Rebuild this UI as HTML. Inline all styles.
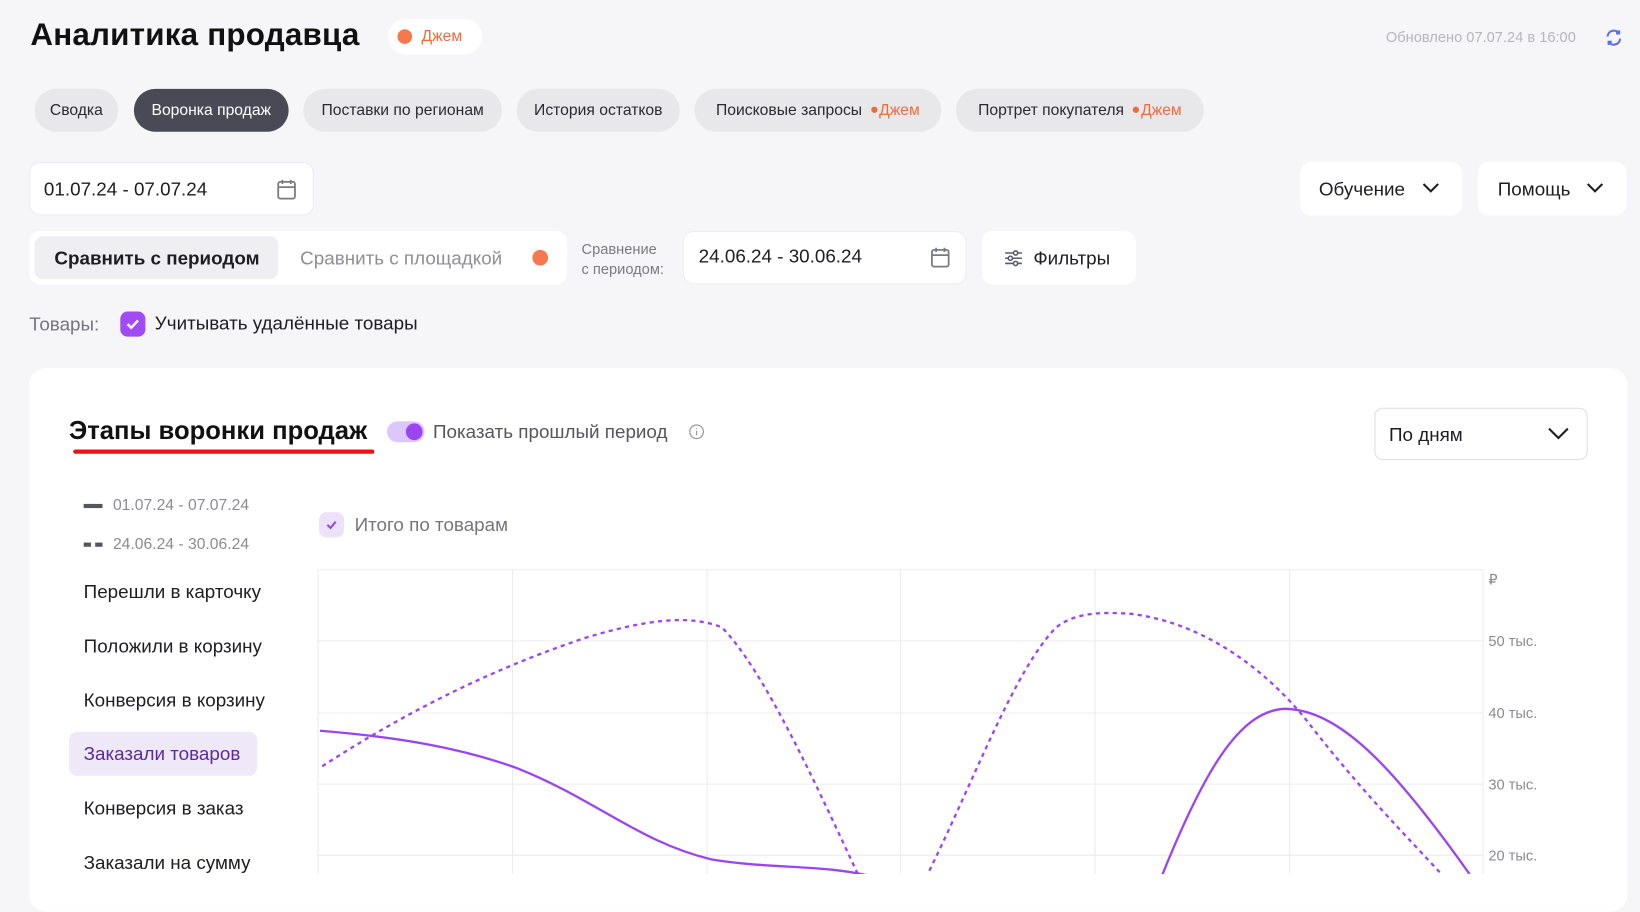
<!DOCTYPE html>
<html><head><meta charset="utf-8">
<style>
html,body{margin:0;padding:0;width:1640px;height:874px;overflow:hidden;background:#f6f6f8;}
#p{position:absolute;left:0;top:0;width:1568px;height:836px;transform:scale(1.04592,1.04545);transform-origin:0 0;font-family:"Liberation Sans",sans-serif;color:#1d1d22;}
.a{position:absolute;white-space:nowrap;}
.tab{position:absolute;top:85px;height:41px;border-radius:21px;background:#e8e8eb;font-size:15px;line-height:41px;text-align:center;color:#2a2a30;}
.box{position:absolute;background:#fff;border-radius:10px;}
.jam{color:#f26a3a;}
.dot{display:inline-block;width:6px;height:6px;border-radius:50%;background:#f26a3a;vertical-align:middle;margin:0 2px 2px 0;}
.m{position:absolute;left:80px;font-size:18px;color:#1d1d22;}
.yl{position:absolute;left:1423px;font-size:14px;color:#8b8b93;}
</style></head><body><div id="p">
<div class="a" style="left:29px;top:17px;font-size:30px;font-weight:bold;color:#111;letter-spacing:0.2px;">Аналитика продавца</div>
<div class="a" style="left:371px;top:18px;width:90px;height:34px;border-radius:17px;background:#fff;"></div>
<div class="a" style="left:380px;top:28px;width:14px;height:14px;border-radius:50%;background:#f47a4e;"></div>
<div class="a jam" style="left:403px;top:26px;font-size:15px;">Джем</div>
<div class="a" style="left:1325px;top:27px;font-size:14px;color:#b6b6bd;">Обновлено 07.07.24 в 16:00</div>
<svg class="a" style="left:1534px;top:27px" width="18" height="18" viewBox="0 0 18 18" fill="none" stroke="#5a6ef0" stroke-width="2"><path d="M3 8a6 6 0 0 1 11-3M15 10a6 6 0 0 1-11 3"/><path d="M14 2v3h-3M4 16v-3h3"/></svg>

<div class="tab" style="left:33px;width:80px;">Сводка</div>
<div class="tab" style="left:128px;width:148px;background:#4a4a57;color:#fff;">Воронка продаж</div>
<div class="tab" style="left:290px;width:190px;">Поставки по регионам</div>
<div class="tab" style="left:494px;width:156px;">История остатков</div>
<div class="tab" style="left:664px;width:236px;">Поисковые запросы &nbsp;<span class="dot"></span><span class="jam">Джем</span></div>
<div class="tab" style="left:914px;width:237px;">Портрет покупателя &nbsp;<span class="dot"></span><span class="jam">Джем</span></div>

<div class="box" style="left:28px;top:155px;width:272px;height:51px;border:1px solid #ececef;box-sizing:border-box;"></div>
<div class="a" style="left:42px;top:171px;font-size:18px;">01.07.24 - 07.07.24</div>
<svg class="a" style="left:263px;top:170px" width="22" height="22" viewBox="0 0 22 22" fill="none" stroke="#7a7a84" stroke-width="1.7"><rect x="3" y="4" width="16" height="16" rx="2"/><path d="M3 9h16M7 2v4M15 2v4"/></svg>

<div class="box" style="left:1243px;top:155px;width:155px;height:51px;"></div>
<div class="a" style="left:1261px;top:171px;font-size:18px;">Обучение</div>
<svg class="a" style="left:1358px;top:173px" width="20" height="14" viewBox="0 0 20 14" fill="none" stroke="#1d1d22" stroke-width="2"><path d="M3 3l7 7 7-7"/></svg>
<div class="box" style="left:1413px;top:155px;width:142px;height:51px;"></div>
<div class="a" style="left:1432px;top:171px;font-size:18px;">Помощь</div>
<svg class="a" style="left:1515px;top:173px" width="20" height="14" viewBox="0 0 20 14" fill="none" stroke="#1d1d22" stroke-width="2"><path d="M3 3l7 7 7-7"/></svg>

<div class="box" style="left:28px;top:221px;width:514px;height:51px;"></div>
<div class="a" style="left:33px;top:226px;width:233px;height:41px;border-radius:8px;background:#efeff2;"></div>
<div class="a" style="left:52px;top:237px;font-size:18px;font-weight:600;">Сравнить с периодом</div>
<div class="a" style="left:287px;top:237px;font-size:18px;color:#8e8e96;">Сравнить с площадкой</div>
<div class="a" style="left:509px;top:239px;width:15px;height:15px;border-radius:50%;background:#f47a4e;"></div>
<div class="a" style="left:556px;top:229px;font-size:14px;color:#7a7a82;line-height:19px;">Сравнение<br>с периодом:</div>
<div class="box" style="left:653px;top:221px;width:271px;height:51px;border:1px solid #ececef;box-sizing:border-box;"></div>
<div class="a" style="left:668px;top:235px;font-size:18px;">24.06.24 - 30.06.24</div>
<svg class="a" style="left:888px;top:235px" width="22" height="22" viewBox="0 0 22 22" fill="none" stroke="#7a7a84" stroke-width="1.7"><rect x="3" y="4" width="16" height="16" rx="2"/><path d="M3 9h16M7 2v4M15 2v4"/></svg>
<div class="box" style="left:939px;top:221px;width:147px;height:51px;"></div>
<svg class="a" style="left:959px;top:237px" width="20" height="20" viewBox="0 0 20 20" fill="none" stroke="#5a5a64" stroke-width="1.5"><path d="M2 5h16M2 10h16M2 15h16"/><circle cx="12" cy="5" r="2" fill="#fff"/><circle cx="7" cy="10" r="2" fill="#fff"/><circle cx="12" cy="15" r="2" fill="#fff"/></svg>
<div class="a" style="left:988px;top:237px;font-size:18px;font-weight:500;">Фильтры</div>

<div class="a" style="left:28px;top:300px;font-size:18px;color:#75757d;">Товары:</div>
<div class="a" style="left:115px;top:298px;width:24px;height:24px;border-radius:7px;background:#a24af4;"></div>
<svg class="a" style="left:115px;top:298px" width="24" height="24" viewBox="0 0 24 24" fill="none" stroke="#fff" stroke-width="2.4"><path d="M7 12l3.5 3.5L17 8.5"/></svg>
<div class="a" style="left:148px;top:299px;font-size:18px;">Учитывать удалённые товары</div>

<div class="box" style="left:28px;top:352px;width:1528px;height:520px;border-radius:16px;"></div>
<div class="a" style="left:66px;top:399px;font-size:24.5px;font-weight:600;color:#111;">Этапы воронки продаж</div>
<div class="a" style="left:70px;top:430px;width:288px;height:4px;border-radius:2px;background:#e8141a;"></div>
<div class="a" style="left:370px;top:403px;width:36px;height:20px;border-radius:10px;background:#dcc7fb;"></div>
<div class="a" style="left:388px;top:405px;width:16px;height:16px;border-radius:50%;background:#9a44f2;"></div>
<div class="a" style="left:414px;top:403px;font-size:18px;color:#55555d;">Показать прошлый период</div>
<svg class="a" style="left:658px;top:405px" width="16" height="16" viewBox="0 0 16 16" fill="none" stroke="#9a9aa2" stroke-width="1.2"><circle cx="8" cy="8" r="6.5"/><path d="M8 7v4.5M8 4.5v1"/></svg>
<div class="a" style="left:1314px;top:390px;width:204px;height:50px;border:1px solid #dedee2;border-radius:8px;box-sizing:border-box;background:#fff;"></div>
<div class="a" style="left:1328px;top:406px;font-size:18px;">По дням</div>
<svg class="a" style="left:1478px;top:407px" width="24" height="16" viewBox="0 0 24 16" fill="none" stroke="#1d1d22" stroke-width="2"><path d="M3 3l9 9 9-9"/></svg>

<div class="a" style="left:80px;top:482px;width:18px;height:4px;background:#55555d;"></div>
<div class="a" style="left:108px;top:475px;font-size:15px;color:#8b8b93;">01.07.24 - 07.07.24</div>
<div class="a" style="left:80px;top:519px;width:7px;height:4px;background:#55555d;"></div>
<div class="a" style="left:91px;top:519px;width:7px;height:4px;background:#55555d;"></div>
<div class="a" style="left:108px;top:512px;font-size:15px;color:#8b8b93;">24.06.24 - 30.06.24</div>
<div class="m" style="top:556px;">Перешли в карточку</div>
<div class="m" style="top:608px;">Положили в корзину</div>
<div class="m" style="top:660px;">Конверсия в корзину</div>
<div class="a" style="left:66px;top:700px;width:180px;height:42px;border-radius:8px;background:#efe8f9;"></div>
<div class="m" style="top:711px;color:#5b2aa0;">Заказали товаров</div>
<div class="m" style="top:763px;">Конверсия в заказ</div>
<div class="m" style="top:815px;">Заказали на сумму</div>

<div class="a" style="left:305px;top:490px;width:24px;height:24px;border-radius:7px;background:#ede2fc;"></div>
<svg class="a" style="left:305px;top:490px" width="24" height="24" viewBox="0 0 24 24" fill="none" stroke="#9a44f2" stroke-width="2"><path d="M8 12l3 3 5-6"/></svg>
<div class="a" style="left:339px;top:492px;font-size:18px;color:#75757d;">Итого по товарам</div>

<svg class="a" style="left:0;top:0" width="1568" height="836" viewBox="0 0 1568 836" fill="none">
<g stroke="#ececef" stroke-width="1">
<path d="M304 545H1418M304 613H1418M304 682H1418M304 750H1418M304 818H1418"/>
<path d="M304 545V836M490 545V836M676 545V836M861 545V836M1047 545V836M1233 545V836M1418 545V836"/>
</g>
<g stroke="#9a44f2" stroke-width="2.2">
<path d="M306 699C380 705 440 715 495 735C570 765 610 805 680 822C740 832 790 826 840 840"/>
<path d="M1110 840C1150 740 1185 678 1230 678C1280 680 1330 730 1405 836"/>
<path stroke-dasharray="4 4" d="M308 733C390 680 470 640 560 610C620 592 660 588 690 600C730 640 780 750 822 840"/>
<path stroke-dasharray="4 4" d="M885 840C930 750 970 640 1010 600C1030 584 1060 586 1080 587C1150 595 1210 640 1250 690C1300 755 1345 800 1378 836"/>
</g>
</svg>
<div class="yl" style="left:1423px;top:546px;">₽</div>
<div class="yl" style="top:605px;">50 тыс.</div>
<div class="yl" style="top:674px;">40 тыс.</div>
<div class="yl" style="top:742px;">30 тыс.</div>
<div class="yl" style="top:810px;">20 тыс.</div>
</div></body></html>
